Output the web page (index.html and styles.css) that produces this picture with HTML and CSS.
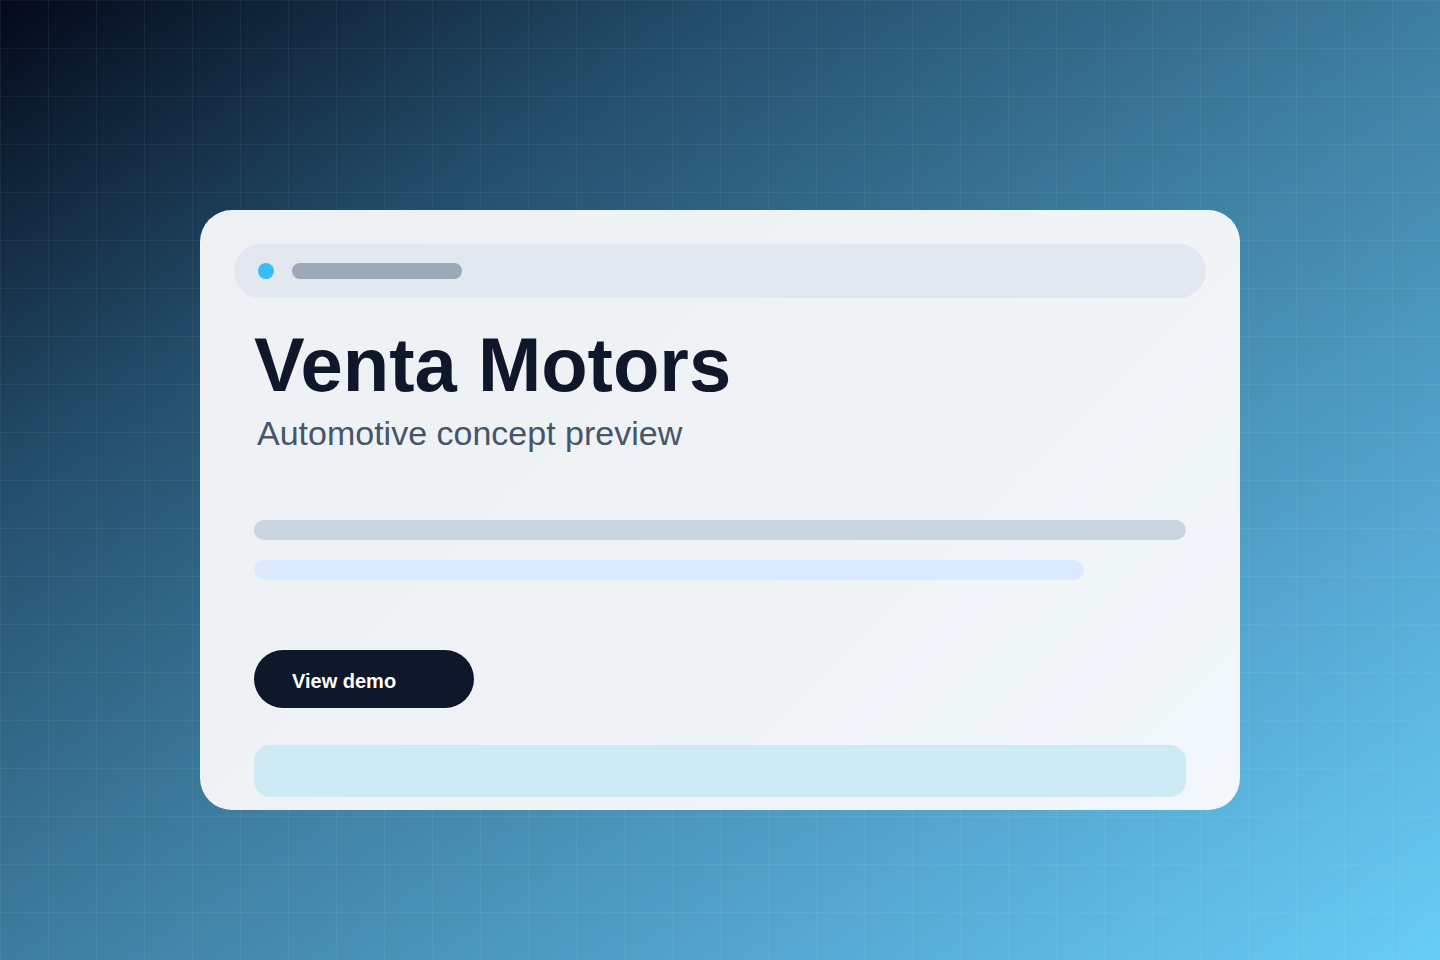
FILE: index.html
```html
<!DOCTYPE html>
<html lang="en">
<head>
<meta charset="utf-8">
<title>Venta Motors</title>
<link rel="stylesheet" href="styles.css">
</head>
<body>
<main class="stage">
  <section class="card">
    <div class="topbar">
      <span class="dot"></span>
      <span class="pill"></span>
    </div>
    <h1 class="title">Venta Motors</h1>
    <p class="subtitle">Automotive concept preview</p>
    <div class="line line-primary"></div>
    <div class="line line-secondary"></div>
    <button class="cta" type="button">View demo</button>
    <div class="panel"></div>
  </section>
</main>
</body>
</html>
```

FILE: styles.css
```css
* { box-sizing: border-box; }
html, body { margin: 0; padding: 0; }
body {
  width: 1440px;
  height: 960px;
  overflow: hidden;
  font-family: "Liberation Sans", Arial, sans-serif;
}
.stage {
  width: 1440px;
  height: 960px;
  display: flex;
  align-items: flex-start;
  justify-content: center;
  padding-top: 210px;
  background-image:
    linear-gradient(rgba(255,255,255,0.05) 1px, transparent 1px),
    linear-gradient(90deg, rgba(255,255,255,0.05) 1px, transparent 1px),
    linear-gradient(to bottom right, #030919 0%, #234d6a 25%, #3d7d9f 50%, #53a5ce 75%, #68cdf7 100%);
  background-size: 48px 48px, 48px 48px, 100% 100%;
  background-position: 0 0, 0 0, 0 0;
}
.card {
  width: 1040px;
  height: 600px;
  border-radius: 32px;
  background: linear-gradient(135deg, #eef1f4 0%, #eff3f6 50%, #f2f7fb 100%);
  padding: 34px 34px 13px 34px;
  display: flex;
  flex-direction: column;
  overflow: hidden;
}
.topbar {
  height: 54px;
  border-radius: 27px;
  background: #e2e8f0;
  display: flex;
  align-items: center;
  padding-left: 24px;
  gap: 18px;
  flex-shrink: 0;
}
.dot {
  width: 16px;
  height: 16px;
  border-radius: 50%;
  background: #38bdf8;
}
.pill {
  width: 170px;
  height: 16px;
  border-radius: 8px;
  background: #9ea9b7;
}
.title {
  margin: 24px 0 0 20px;
  font-size: 76px;
  line-height: 86px;
  font-weight: 700;
  color: #0f172a;
}
.subtitle {
  margin: 6px 0 0 23px;
  font-size: 34px;
  line-height: 39px;
  color: #475569;
}
.line {
  height: 20px;
  border-radius: 10px;
  margin-left: 20px;
  flex-shrink: 0;
}
.line-primary {
  margin-top: 67px;
  width: 932px;
  background: #cbd5e1;
}
.line-secondary {
  margin-top: 20px;
  width: 830px;
  background: #dbeafe;
}
.cta {
  margin: 70px 0 0 20px;
  width: 220px;
  height: 58px;
  border: none;
  border-radius: 29px;
  background: #0f172a;
  color: #ffffff;
  font-family: "Liberation Sans", Arial, sans-serif;
  font-size: 20px;
  font-weight: 700;
  text-align: left;
  padding: 4px 0 0 38px;
  flex-shrink: 0;
}
.panel {
  margin: 37px 0 0 20px;
  width: 932px;
  height: 52px;
  border-radius: 16px;
  background: #cdeaf5;
  flex-shrink: 0;
}
```
